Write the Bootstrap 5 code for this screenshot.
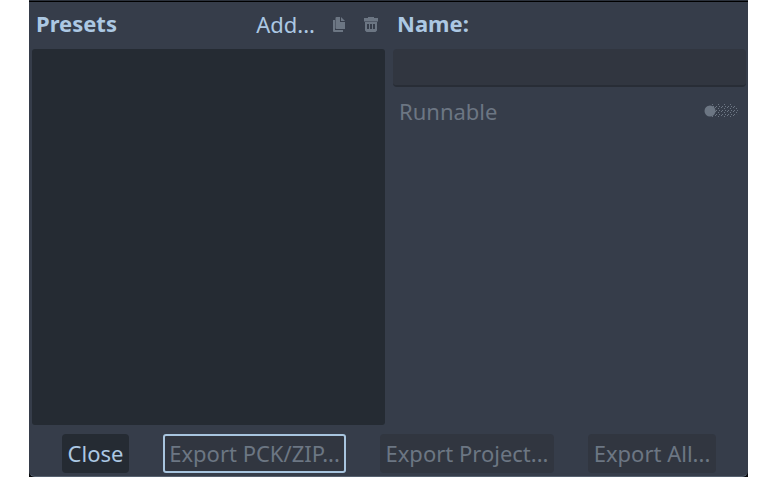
<!DOCTYPE html>
<html lang="en">
<head>
<meta charset="utf-8">
<title>Export</title>
<link href="https://cdn.jsdelivr.net/npm/bootstrap@5.3.0/dist/css/bootstrap.min.css" rel="stylesheet">
<style>
body{background:#fff;font-family:"Noto Sans",sans-serif;font-size:22px;line-height:30px;color:#acc8e3;overflow:hidden}
.dialog{width:719px;height:477px;margin-left:29px;background:#363d4a;border-top:1px solid #2b313b;border-bottom:1px solid #56616f;box-shadow:inset 0 1px #000;border-radius:0 0 6px 6px}
.backing{width:748px;height:477px;background:linear-gradient(90deg,#fff 29px,#08090c 29px)}
.panes{height:424px;padding:0 2px 0 3px;gap:8px}
.pane{width:353px}
.head{height:48px;padding:0 6px 5px 4px}
.head .title{font-size:22px;line-height:30px;font-weight:700}
.presets{background:#252b33;border-radius:3px}
.btn-plain{--bs-btn-color:#acc8e3;--bs-btn-padding-x:0;--bs-btn-padding-y:0;--bs-btn-font-size:22px;--bs-btn-line-height:30px;--bs-btn-disabled-color:#6c7683;--bs-btn-disabled-opacity:1;--bs-btn-disabled-border-color:transparent;border:0}
.add{padding-top:2px}
.name-input.form-control:disabled{height:38px;background:#313640;border:0;border-bottom:2px solid #282d36;border-radius:4px;padding:0 6px}
.muted{color:#6c7683}
.option{height:48px;padding:0 7px 0 6px}
.actions{height:51px;padding:9px 32px 0 33px}
.act{height:39px;border-radius:4px;--bs-btn-color:#acc8e3;--bs-btn-bg:#252b33;--bs-btn-padding-x:0;--bs-btn-padding-y:0;--bs-btn-font-size:22px;--bs-btn-line-height:30px;--bs-btn-border-width:0;--bs-btn-disabled-color:#6c7683;--bs-btn-disabled-bg:#313640;--bs-btn-disabled-opacity:1;white-space:nowrap;padding-bottom:2px}
.act.focused{box-shadow:inset 0 0 0 2px #a8c5df;border-radius:3px}
.w-close{width:67px}.w-pck{width:183px}.w-project{width:174px}.w-all{width:128px}
svg{display:block}
</style>
<script src="https://cdn.jsdelivr.net/npm/bootstrap@5.3.0/dist/js/bootstrap.bundle.min.js"></script>
</head>
<body>
<div class="backing">
<main class="dialog d-flex flex-column">
  <div class="panes d-flex">
    <section class="pane d-flex flex-column">
      <div class="head d-flex align-items-center">
        <h1 class="title m-0 me-auto">Presets</h1>
        <button class="btn btn-plain add" type="button">Add...</button>
        <button class="btn btn-plain ms-3 mt-1" type="button" disabled aria-label="Duplicate">
          <svg width="16" height="18" viewBox="0 0 16 18" fill="currentColor"><path d="M2 4h2v10h8v2H3a1 1 0 0 1-1-1zM5.500 1H9v5h5v7H5.500a1 1 0 0 1-1-1V2a1 1 0 0 1 1-1zM10 1l4 4h-4z"/></svg>
        </button>
        <button class="btn btn-plain ms-3 mt-1" type="button" disabled aria-label="Delete">
          <svg width="16" height="18" viewBox="0 0 16 18" fill="currentColor"><path fill-rule="evenodd" d="M5 1h6v1h4v3.500H1V2h4zM2 6h12v8.500L12.500 16h-9L2 14.500zM4 8v5h2V8zm3 0v5h2V8zm3 0v5h2V8z"/></svg>
        </button>
      </div>
      <div class="presets flex-grow-1"></div>
    </section>
    <section class="pane">
      <div class="head d-flex align-items-center"><label class="title" for="presetName">Name:</label></div>
      <input id="presetName" class="name-input form-control" type="text" disabled>
      <div class="option muted d-flex align-items-center justify-content-between">
        <span>Runnable</span>
        <svg width="36" height="16" viewBox="0 0 36 16" role="img" aria-label="Off">
          <defs><pattern id="dots" width="6" height="4" patternUnits="userSpaceOnUse"><path fill="#6c7683" d="M0 0h1v1H0zM3 1h1v1H3zM1 3h1v1H1zM4 3h1v1H4z"/></pattern></defs>
          <rect x="3" y="1" width="32" height="14" rx="7" fill="url(#dots)"/>
          <circle cx="7" cy="8" r="5.500" fill="#6c7683"/>
        </svg>
      </div>
    </section>
  </div>
  <div class="actions d-flex justify-content-between">
    <button class="btn act w-close" type="button">Close</button>
    <button class="btn act w-pck focused" type="button" disabled>Export PCK/ZIP...</button>
    <button class="btn act w-project" type="button" disabled>Export Project...</button>
    <button class="btn act w-all" type="button" disabled>Export All...</button>
  </div>
</main>
</div>
</body>
</html>
